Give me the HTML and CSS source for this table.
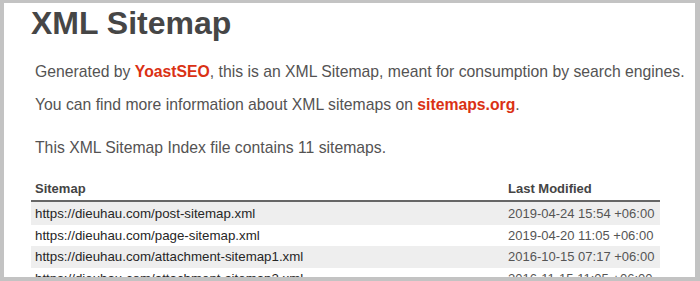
FILE: index.html
```html
<!DOCTYPE html>
<html>
<head>
<meta charset="utf-8">
<link rel="stylesheet" href="styles.css">
</head>
<body>
<div class="frame">
  <div class="page">
    <h1 class="title">XML Sitemap</h1>
    <p class="desc">Generated by <a href="#">YoastSEO</a>, this is an XML Sitemap, meant for consumption by search engines.</p>
    <p class="desc">You can find more information about XML sitemaps on <a href="#">sitemaps.org</a>.</p>
    <p class="expl">This XML Sitemap Index file contains 11 sitemaps.</p>
    <table class="sitemap">
      <thead>
        <tr><th class="col-url">Sitemap</th><th class="col-date">Last Modified</th></tr>
      </thead>
      <tbody>
        <tr><td class="url">https://dieuhau.com/post-sitemap.xml</td><td class="date">2019-04-24 15:54 +06:00</td></tr>
        <tr><td class="url">https://dieuhau.com/page-sitemap.xml</td><td class="date">2019-04-20 11:05 +06:00</td></tr>
        <tr><td class="url">https://dieuhau.com/attachment-sitemap1.xml</td><td class="date">2016-10-15 07:17 +06:00</td></tr>
        <tr><td class="url">https://dieuhau.com/attachment-sitemap2.xml</td><td class="date">2016-11-15 11:05 +06:00</td></tr>
      </tbody>
    </table>
  </div>
</div>
</body>
</html>
```
FILE: styles.css
```css
html, body {
  margin: 0;
  padding: 0;
  background: #c3c3c3;
  height: 281px;
  overflow: hidden;
}
.frame {
  margin: 3px 5px 0 4px;
  height: 274px;
  background: #fff;
  overflow: hidden;
}
.page {
  padding: 0 0 0 27px;
  font-family: "Liberation Sans", Arial, sans-serif;
  color: #545353;
}
.title {
  margin: 0;
  padding-top: 1px;
  font-size: 32px;
  line-height: 38px;
  font-weight: bold;
  color: #464646;
}
.desc, .expl {
  margin: 0;
  padding-left: 4px;
  font-size: 15.75px;
  line-height: 20px;
}
.desc { margin-top: 20px; }
.desc + .desc { margin-top: 13px; }
.expl { margin-top: 23px; }
a {
  color: #da3114;
  font-weight: bold;
  text-decoration: none;
}
.sitemap {
  margin-top: 20px;
  border-collapse: collapse;
  width: 629px;
}
.sitemap th {
  text-align: left;
  font-size: 13px;
  font-weight: bold;
  color: #444;
  padding: 3px 4px 4px 4px;
  border-bottom: 2px solid #666;
}
.sitemap .col-date { width: 148px; }
.sitemap td {
  padding: 3px 4px 3px 4px;
  line-height: 15.5px;
}
.sitemap td.url {
  font-size: 13.3px;
  color: #262626;
}
.sitemap td.date {
  font-size: 13px;
  color: #555;
}
.sitemap tbody tr:nth-child(odd) td {
  background: #eee;
}
.sitemap thead + tbody tr:first-child td { padding-top: 4px; }
```
